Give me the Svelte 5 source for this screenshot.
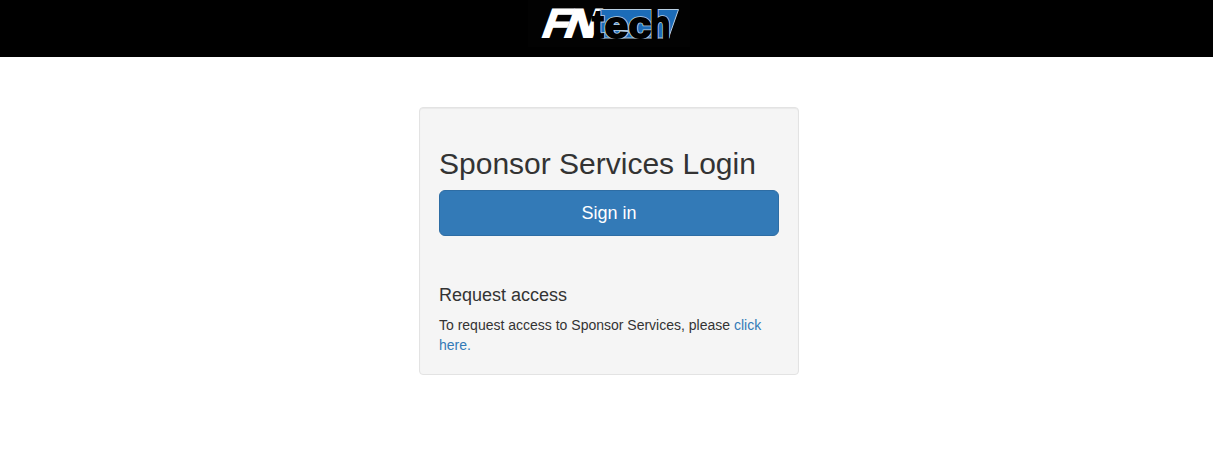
<script>
  const title = 'Sponsor Services Login';
</script>

<header class="topbar">
  <svg class="logo" width="162" height="47" viewBox="528 0 162 47" role="img" aria-label="FNtech">
    <defs>
      <clipPath id="panel"><path d="M599 9H679.500L669.500 38.500H599Z" /></clipPath>
    </defs>
    <rect x="528" y="0" width="162" height="47" fill="#020202" />
    <g class="fn">
      <text transform="translate(540 37.300) skewX(-20) scale(1.03 1)">F</text>
      <text transform="translate(562 37.300) skewX(-20) scale(1.14 1)">N</text>
    </g>
    <path d="M600 9.500H678.500L668.500 38H600Z" fill="#1c6cb8" stroke="#b9cfe2" stroke-width="1" />
    <g class="outline" clip-path="url(#panel)">
      <use href="#letters" />
    </g>
    <g class="solid">
      <g id="letters">
        <text transform="translate(592 37.500) scale(0.95 1.04)">t</text>
        <text transform="translate(604.500 37.500) scale(1.15 1)">e</text>
        <text transform="translate(628.500 37.500) scale(1.1 1)">c</text>
        <text transform="translate(650 37.500) scale(0.9 1.03)">h</text>
      </g>
    </g>
  </svg>
</header>

<main>
  <section class="well">
    <h2>{title}</h2>
    <button type="button">Sign in</button>
    <h4>Request access</h4>
    <p>To request access to Sponsor Services, please <a href="#request">click here.</a></p>
  </section>
</main>

<style>
  :global(body) {
    background: #fff;
    color: #333;
    font: 14px/20px "Liberation Sans", Arial, sans-serif;
  }
  .topbar {
    height: 57px;
    background: #000;
    display: flex;
    justify-content: center;
    align-items: flex-start;
    padding-left: 5px;
    box-sizing: border-box;
  }
  .logo { display: block; }
  .fn text {
    font: bold 40px "Liberation Sans", Arial, sans-serif;
    fill: #fff;
    stroke: #fff;
    stroke-width: 1.8px;
  }
  #letters text { font: bold 37px "Liberation Sans", Arial, sans-serif; }
  .solid {
    fill: #000;
    stroke: #000;
    stroke-width: 1.8px;
  }
  .outline {
    fill: #000;
    stroke: #b9cfe2;
    stroke-width: 3.4px;
  }
  main {
    display: flex;
    justify-content: center;
    padding: 50px 0 0 5px;
  }
  .well {
    box-sizing: border-box;
    width: 380px;
    height: 268px;
    padding: 19px;
    border: 1px solid #e3e3e3;
    border-radius: 4px;
    background: #f5f5f5;
    box-shadow: inset 0 1px 1px rgba(0, 0, 0, 0.05);
  }
  h2 {
    margin: 20px 0 10px;
    font-size: 30px;
    font-weight: normal;
    line-height: 33px;
  }
  button {
    display: block;
    width: 100%;
    height: 46px;
    padding: 0;
    border: 1px solid #2e6da4;
    border-radius: 6px;
    background: #337ab7;
    color: #fff;
    font: 18px/24px "Liberation Sans", Arial, sans-serif;
  }
  h4 {
    margin: 49px 0 10px;
    font-size: 18px;
    font-weight: normal;
    line-height: 20px;
  }
  p { margin: 0; }
  a { color: #337ab7; text-decoration: none; }
</style>
